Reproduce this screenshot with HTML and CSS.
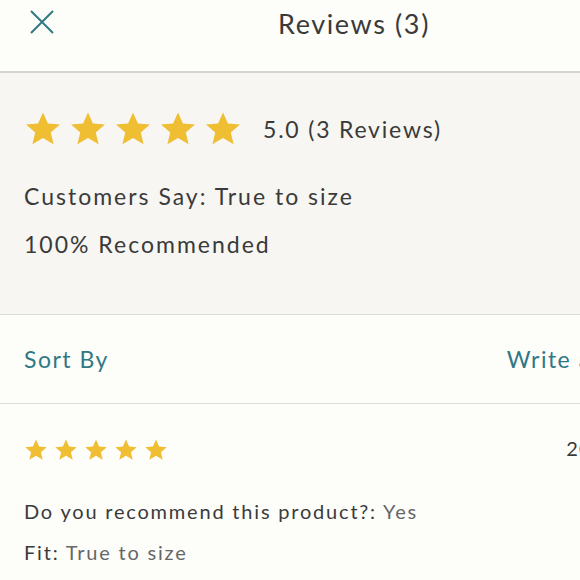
FILE: index.html
```html
<!DOCTYPE html>
<html>
<head>
<meta charset="utf-8">
<link rel="stylesheet" href="styles.css">
</head>
<body>
<div class="page">
  <header class="topbar">
    <button class="close" aria-label="Close">
      <svg width="26" height="26" viewBox="0 0 26 26"><path d="M2 2L24 24M24 2L2 24" stroke="#2f7884" stroke-width="2" fill="none"/></svg>
    </button>
    <h1 class="title">Reviews (3)</h1>
  </header>

  <section class="summary">
    <div class="rating-row">
      <div class="stars big">
        <svg viewBox="0 0 24 24"><path d="M12 1.5l3.1 7.1 7.6.6-5.8 5 1.8 7.5L12 17.7l-6.7 4 1.8-7.5-5.8-5 7.6-.6z"/></svg>
        <svg viewBox="0 0 24 24"><path d="M12 1.5l3.1 7.1 7.6.6-5.8 5 1.8 7.5L12 17.7l-6.7 4 1.8-7.5-5.8-5 7.6-.6z"/></svg>
        <svg viewBox="0 0 24 24"><path d="M12 1.5l3.1 7.1 7.6.6-5.8 5 1.8 7.5L12 17.7l-6.7 4 1.8-7.5-5.8-5 7.6-.6z"/></svg>
        <svg viewBox="0 0 24 24"><path d="M12 1.5l3.1 7.1 7.6.6-5.8 5 1.8 7.5L12 17.7l-6.7 4 1.8-7.5-5.8-5 7.6-.6z"/></svg>
        <svg viewBox="0 0 24 24"><path d="M12 1.5l3.1 7.1 7.6.6-5.8 5 1.8 7.5L12 17.7l-6.7 4 1.8-7.5-5.8-5 7.6-.6z"/></svg>
      </div>
      <span class="score">5.0 (3 Reviews)</span>
    </div>
    <p class="summary-line">Customers Say: True to size</p>
    <p class="summary-line">100% Recommended</p>
  </section>

  <nav class="actions">
    <a class="action">Sort By</a>
    <a class="action">Write a Review</a>
  </nav>

  <article class="review">
    <div class="review-head">
      <div class="stars small">
        <svg viewBox="0 0 24 24"><path d="M12 1.5l3.1 7.1 7.6.6-5.8 5 1.8 7.5L12 17.7l-6.7 4 1.8-7.5-5.8-5 7.6-.6z"/></svg>
        <svg viewBox="0 0 24 24"><path d="M12 1.5l3.1 7.1 7.6.6-5.8 5 1.8 7.5L12 17.7l-6.7 4 1.8-7.5-5.8-5 7.6-.6z"/></svg>
        <svg viewBox="0 0 24 24"><path d="M12 1.5l3.1 7.1 7.6.6-5.8 5 1.8 7.5L12 17.7l-6.7 4 1.8-7.5-5.8-5 7.6-.6z"/></svg>
        <svg viewBox="0 0 24 24"><path d="M12 1.5l3.1 7.1 7.6.6-5.8 5 1.8 7.5L12 17.7l-6.7 4 1.8-7.5-5.8-5 7.6-.6z"/></svg>
        <svg viewBox="0 0 24 24"><path d="M12 1.5l3.1 7.1 7.6.6-5.8 5 1.8 7.5L12 17.7l-6.7 4 1.8-7.5-5.8-5 7.6-.6z"/></svg>
      </div>
      <span class="date">2020-06-14</span>
    </div>
    <p class="attr">Do you recommend this product?: <span class="val">Yes</span></p>
    <p class="attr">Fit: <span class="val">True to size</span></p>
  </article>
</div>
</body>
</html>
```
FILE: styles.css
```css
html, body {
  margin: 0;
  padding: 0;
  overflow: hidden;
  background: #fdfdfa;
}
.page {
  width: 708px;
  font-family: "Lato", "Noto Sans", sans-serif;
  color: #3a3a3a;
}
.topbar {
  position: relative;
  height: 71px;
  border-bottom: 2px solid #d4d4d0;
  display: flex;
  justify-content: center;
  background: #fdfdfa;
}
.close {
  position: absolute;
  left: 29px;
  top: 9px;
  padding: 0;
  border: 0;
  background: none;
  width: 26px;
  height: 26px;
}
.close svg { display: block; }
.title {
  margin: 0;
  padding-top: 6px;
  font-size: 27px;
  font-weight: 400;
  letter-spacing: 1.6px;
  line-height: 36px;
}
.summary {
  background: #f7f6f2;
  padding: 37px 24px 55px;
  border-bottom: 1px solid #dcdcd8;
}
.rating-row {
  display: flex;
  align-items: center;
  gap: 21px;
  height: 38px;
}
.stars { display: flex; }
.stars svg { fill: #efbe33; display: block; }
.stars.big { gap: 7px; }
.stars.big svg { width: 38px; height: 38px; }
.stars.small { gap: 6px; }
.stars.small svg { width: 24px; height: 24px; }
.score {
  font-size: 23px;
  letter-spacing: 1.8px;
  color: #3a3a3a;
}
.summary-line {
  margin: 0;
  font-size: 23px;
  letter-spacing: 2px;
  line-height: 30px;
}
.rating-row + .summary-line { margin-top: 33px; }
.summary-line + .summary-line { margin-top: 18px; }
.actions {
  display: flex;
  justify-content: space-between;
  padding: 0 27px 0 24px;
  height: 88px;
  align-items: center;
  border-bottom: 1px solid #dcdcd8;
}
.action {
  color: #2f7884;
  font-size: 23px;
  letter-spacing: 1.5px;
}
.review {
  padding: 34px 24px 0;
}
.review-head {
  display: flex;
  justify-content: space-between;
  align-items: center;
  padding-right: 0;
}
.date {
  font-size: 20px;
  color: #3a3a3a;
  margin-top: -4px;
  letter-spacing: 1px;
}
.attr {
  margin: 0;
  font-size: 20px;
  letter-spacing: 1.8px;
  line-height: 26px;
}
.review-head + .attr { margin-top: 36px; }
.attr + .attr { margin-top: 15px; }
.val { color: #666; }
```
